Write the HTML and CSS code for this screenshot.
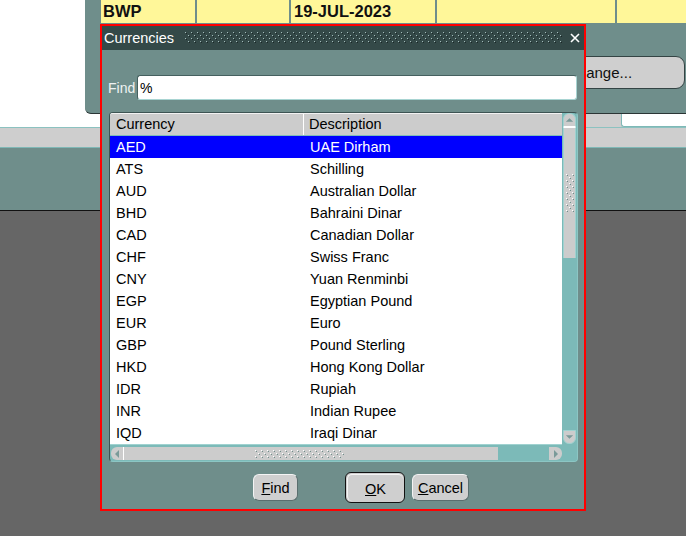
FILE: index.html
```html
<!DOCTYPE html>
<html>
<head>
<meta charset="utf-8">
<title>Currencies</title>
<link rel="stylesheet" href="styles.css">
</head>
<body>
<div class="screen">
  <div class="top">
    <div class="top-left"></div>
    <div class="panel">
      <div class="record">
        <div class="cell c1">BWP</div>
        <div class="cell c2"></div>
        <div class="cell c3">19-JUL-2023</div>
        <div class="cell c4"></div>
        <div class="cell c5"></div>
      </div>
      <div class="panel-actions">
        <div class="bg-btn">Change...</div>
      </div>
    </div>
  </div>
  <div class="strip">
    <div class="strip-left"></div>
    <div class="strip-right"><div class="strip-field"></div></div>
  </div>
  <div class="band"></div>
  <div class="teal-band"></div>

  <div class="dialog">
    <div class="titlebar">
      <span class="title">Currencies</span>
      <svg class="title-dots" width="378" height="12">
        <defs>
          <pattern id="tdots" width="6" height="6" patternUnits="userSpaceOnUse">
            <rect x="0" y="0" width="1" height="1" fill="#a3bbba"/>
            <rect x="1" y="1" width="1" height="1" fill="#1c2828"/>
            <rect x="3" y="3" width="1" height="1" fill="#a3bbba"/>
            <rect x="4" y="4" width="1" height="1" fill="#1c2828"/>
          </pattern>
        </defs>
        <rect width="378" height="12" fill="url(#tdots)"/>
      </svg>
      <svg class="close" width="10" height="10" viewBox="0 0 10 10">
        <path d="M1 1 L9 9 M9 1 L1 9" stroke="#ffffff" stroke-width="1.6" fill="none"/>
      </svg>
    </div>

    <div class="find-row">
      <span class="find-label">Find</span>
      <div class="find-input">%</div>
    </div>

    <div class="grid">
      <div class="list">
        <div class="thead">
          <div class="th th-cur">Currency</div>
          <div class="th th-desc">Description</div>
        </div>
        <div class="row sel"><div class="td td-cur">AED</div><div class="td td-desc">UAE Dirham</div></div>
        <div class="row"><div class="td td-cur">ATS</div><div class="td td-desc">Schilling</div></div>
        <div class="row"><div class="td td-cur">AUD</div><div class="td td-desc">Australian Dollar</div></div>
        <div class="row"><div class="td td-cur">BHD</div><div class="td td-desc">Bahraini Dinar</div></div>
        <div class="row"><div class="td td-cur">CAD</div><div class="td td-desc">Canadian Dollar</div></div>
        <div class="row"><div class="td td-cur">CHF</div><div class="td td-desc">Swiss Franc</div></div>
        <div class="row"><div class="td td-cur">CNY</div><div class="td td-desc">Yuan Renminbi</div></div>
        <div class="row"><div class="td td-cur">EGP</div><div class="td td-desc">Egyptian Pound</div></div>
        <div class="row"><div class="td td-cur">EUR</div><div class="td td-desc">Euro</div></div>
        <div class="row"><div class="td td-cur">GBP</div><div class="td td-desc">Pound Sterling</div></div>
        <div class="row"><div class="td td-cur">HKD</div><div class="td td-desc">Hong Kong Dollar</div></div>
        <div class="row"><div class="td td-cur">IDR</div><div class="td td-desc">Rupiah</div></div>
        <div class="row"><div class="td td-cur">INR</div><div class="td td-desc">Indian Rupee</div></div>
        <div class="row"><div class="td td-cur">IQD</div><div class="td td-desc">Iraqi Dinar</div></div>
      </div>

      <div class="vscroll">
        <div class="varrow up">
          <svg width="12" height="8" viewBox="0 0 12 8"><polygon points="2,6 10,6 6,2" fill="#7a9a99"/></svg>
        </div>
        <div class="vthumb">
          <svg class="vgrip" width="8" height="38">
            <defs>
              <pattern id="vdots" width="6" height="6" patternUnits="userSpaceOnUse">
                <rect x="0" y="0" width="1" height="1" fill="#ffffff"/>
                <rect x="1" y="1" width="1" height="1" fill="#6f8e8b"/>
                <rect x="3" y="3" width="1" height="1" fill="#ffffff"/>
                <rect x="4" y="4" width="1" height="1" fill="#6f8e8b"/>
              </pattern>
            </defs>
            <rect width="8" height="38" fill="url(#vdots)"/>
          </svg>
        </div>
        <div class="vtrack"></div>
        <div class="varrow down">
          <svg width="12" height="8" viewBox="0 0 12 8"><polygon points="2,2 10,2 6,6" fill="#7a9a99"/></svg>
        </div>
      </div>

      <div class="hscroll">
        <div class="harrow left">
          <svg width="8" height="12" viewBox="0 0 8 12"><polygon points="6,2 6,10 2,6" fill="#7a9a99"/></svg>
        </div>
        <div class="hthumb">
          <svg class="hgrip" width="90" height="8">
            <defs>
              <pattern id="hdots" width="6" height="6" patternUnits="userSpaceOnUse">
                <rect x="0" y="0" width="1" height="1" fill="#ffffff"/>
                <rect x="1" y="1" width="1" height="1" fill="#6f8e8b"/>
                <rect x="3" y="3" width="1" height="1" fill="#ffffff"/>
                <rect x="4" y="4" width="1" height="1" fill="#6f8e8b"/>
              </pattern>
            </defs>
            <rect width="90" height="8" fill="url(#hdots)"/>
          </svg>
        </div>
        <div class="htrack"></div>
        <div class="harrow right">
          <svg width="8" height="12" viewBox="0 0 8 12"><polygon points="2,2 2,10 6,6" fill="#7a9a99"/></svg>
        </div>
      </div>
      <div class="corner"></div>
    </div>

    <div class="buttons">
      <div class="btn btn-find"><u>F</u>ind</div>
      <div class="btn btn-ok"><div class="btn-ok-inner"><u>O</u>K</div></div>
      <div class="btn btn-cancel"><u>C</u>ancel</div>
    </div>
  </div>
</div>
</body>
</html>
```

FILE: styles.css
```css
* { box-sizing: border-box; }
html, body { margin: 0; padding: 0; }
body {
  width: 686px;
  height: 536px;
  overflow: hidden;
  background: #666666;
  font-family: "Liberation Sans", Arial, sans-serif;
}
.screen {
  position: relative;
  width: 686px;
  height: 536px;
  background: #666666;
}

/* ---------- background form ---------- */
.top { display: flex; height: 114px; background: #ffffff; }
.top-left { width: 85px; }
.panel {
  flex: 1;
  background: #6f8e8b;
  border-bottom: 1px solid #2b3535;
  border-bottom-left-radius: 6px;
}
.record { display: flex; gap: 2px; margin-left: 16px; height: 23px; }
.cell {
  background: #fff799;
  font-weight: bold;
  font-size: 16.5px;
  line-height: 23px;
  color: #111111;
}
.c1 { width: 94px; padding-left: 2px; }
.c2 { width: 92px; }
.c3 { width: 144px; padding-left: 3px; }
.c4 { width: 178px; }
.c5 { flex: 1; }
.panel-actions { display: flex; justify-content: flex-end; margin-top: 33px; padding-right: 1px; }
.bg-btn {
  width: 165px;
  height: 33px;
  background: #cfcfcf;
  border: 1px solid #344444;
  border-radius: 9px;
  font-size: 15px;
  line-height: 31px;
  padding-left: 46px;
  color: #111111;
}
.strip { display: flex; height: 13px; }
.strip-left { flex: 1; background: #ffffff; }
.strip-right { width: 100px; background: #cecece; display: flex; justify-content: flex-end; }
.strip-field {
  width: 65px;
  background: #ffffff;
  border-left: 1px solid #7fb8b6;
  border-bottom: 1px solid #7fb8b6;
  border-bottom-left-radius: 3px;
}
.band {
  height: 21px;
  background: #cecece;
  border-top: 1px solid #8cc2c0;
  border-bottom: 1px solid #7fb8b6;
}
.teal-band {
  height: 63px;
  background: #6f8e8b;
  border-bottom: 1px solid #111111;
}

/* ---------- dialog ---------- */
.dialog {
  position: absolute;
  left: 100px;
  top: 24px;
  width: 486px;
  height: 487px;
  border: 2px solid #ff0000;
  background: #6f8e8b;
  display: flex;
  flex-direction: column;
}
.titlebar {
  height: 24px;
  background: #344948;
  display: flex;
  align-items: center;
  color: #ffffff;
}
.title { font-size: 14.5px; padding-left: 2px; width: 83px; }
.title-dots { flex: none; margin-right: 7px; }
.close { flex: none; }

.find-row {
  display: flex;
  align-items: center;
  margin-top: 25px;
  height: 25px;
  padding-left: 6px;
}
.find-label { width: 29px; font-size: 14px; color: #eef2f2; padding-top: 1px; }
.find-input {
  width: 440px;
  height: 25px;
  background: #ffffff;
  border: 1px solid;
  border-color: #45605f #a8d4d2 #a8d4d2 #45605f;
  border-radius: 3px;
  font-size: 14px;
  line-height: 24px;
  padding-left: 2px;
  color: #000000;
}

.grid {
  margin: 12px 0 0 7px;
  width: 469px;
  height: 350px;
  border: 1px solid;
  border-color: #3d5453 #8cc6c4 #8cc6c4 #3d5453;
  border-radius: 4px;
  display: grid;
  grid-template-columns: 452px 15px;
  grid-template-rows: 331px 17px;
  background: #7cbab8;
  overflow: hidden;
}
.list { background: #ffffff; overflow: hidden; font-size: 14.5px; color: #000000; }
.thead {
  display: flex;
  height: 23px;
  background: #cccccc;
  border-top: 1px solid #f2f2f2;
  border-bottom: 1px solid #7fbcba;
}
.th { line-height: 21px; }
.th-cur { width: 194px; padding-left: 6px; border-right: 1px solid #ffffff; }
.th-desc { padding-left: 5px; }
.row { display: flex; height: 22px; line-height: 22px; }
.row.sel { background: #0000ff; color: #ffffff; }
.td-cur { width: 194px; padding-left: 6px; }
.td-desc { padding-left: 6px; }

.vscroll {
  display: flex;
  flex-direction: column;
  padding: 0 1px;
}
.varrow {
  height: 14px;
  background: #cccccc;
  border: 1px solid #a0d2d0;
  display: flex;
  align-items: center;
  justify-content: center;
}
.varrow.up { border-radius: 6px 6px 0 0; border-bottom: 1px solid #ffffff; }
.varrow.down { border-radius: 0 0 6px 6px; }
.vthumb {
  height: 131px;
  background: #cccccc;
  border-left: 1px solid #a0d2d0;
  border-right: 1px solid #a0d2d0;
  border-top: 1px solid #ffffff;
  display: flex;
  align-items: center;
  justify-content: center;
}
.vtrack { flex: 1; }

.hscroll {
  display: flex;
  padding: 2px 0 1px 1px;
  border-top: 1px solid #a0d2d0;
}
.harrow {
  width: 13px;
  background: #cccccc;
  display: flex;
  align-items: center;
  justify-content: center;
}
.harrow.left { border-radius: 6px 0 0 6px; border-right: 1px solid #ffffff; }
.harrow.right { border-radius: 0 6px 6px 0; }
.hthumb {
  width: 374px;
  background: #cccccc;
  display: flex;
  align-items: center;
  justify-content: center;
}
.hgrip { margin-right: 22px; }
.htrack { flex: 1; }
.corner { background: #7cbab8; }

.buttons {
  display: flex;
  align-items: center;
  height: 31px;
  margin-top: 10px;
  padding-left: 151px;
}
.btn {
  height: 27px;
  background: #cfcfcf;
  border: 1px solid;
  border-color: #f4f4f4 #5a6e6e #5a6e6e #f4f4f4;
  border-radius: 6px;
  font-size: 14.5px;
  line-height: 26px;
  text-align: center;
  color: #000000;
}
.btn-find { width: 45px; }
.btn-ok {
  width: 60px;
  height: 31px;
  margin-left: 47px;
  border: 1px solid #111111;
  padding: 1px;
  background: #cfcfcf;
}
.btn-ok-inner {
  height: 27px;
  line-height: 28px;
  border-radius: 5px;
  border-top: 1px solid #f4f4f4;
  border-left: 1px solid #f4f4f4;
}
.btn-cancel { width: 57px; margin-left: 7px; }
```
